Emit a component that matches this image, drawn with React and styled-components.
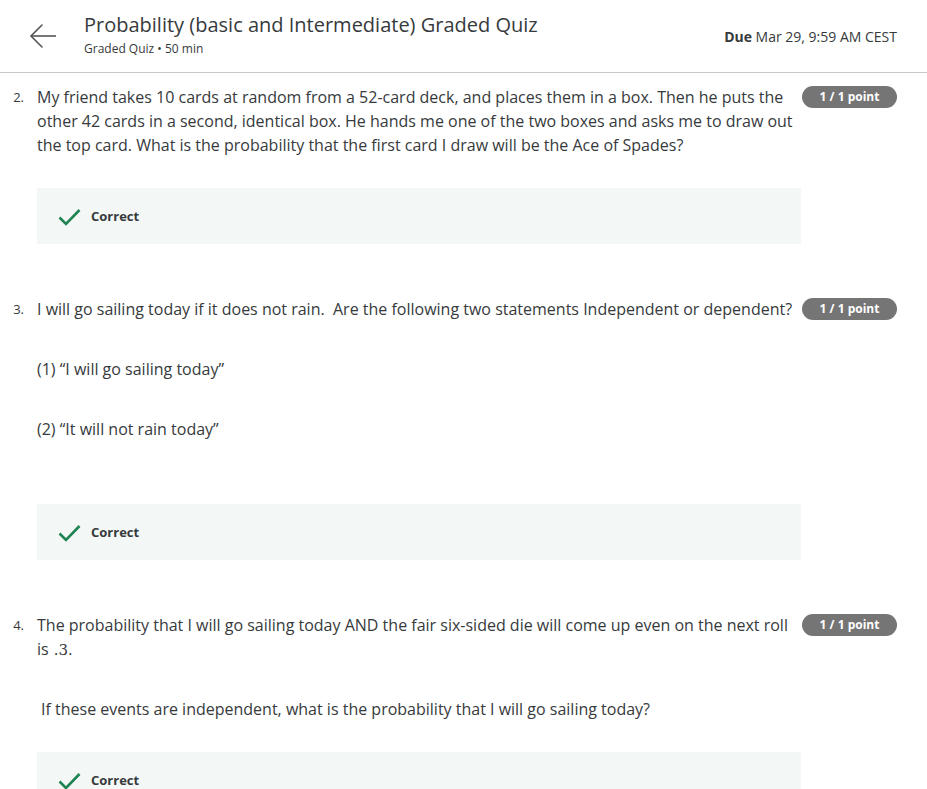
import React from "react";
import styled, { createGlobalStyle } from "styled-components";

const Global = createGlobalStyle`
  html, body { margin: 0; padding: 0; background: #fff; }
  body { font-family: "Open Sans", "Noto Sans", sans-serif; color: #373a3c; }
  * { box-sizing: border-box; }
`;

const Page = styled.div`
  width: 927px;
  height: 789px;
  overflow: hidden;
  background: #fff;
`;

const Header = styled.header`
  display: flex;
  align-items: center;
  height: 73px;
  padding: 0 29px 0 29px;
  border-bottom: 1px solid #c8c8c8;
`;

const BackButton = styled.button`
  display: flex;
  align-items: center;
  justify-content: center;
  width: 28px;
  height: 28px;
  padding: 0;
  margin: -1px 27px 0 0;
  background: none;
  border: none;
`;

const TitleBlock = styled.div`
  display: flex;
  flex-direction: column;
  flex: 1;
  margin-top: -4px;
`;

const Title = styled.h1`
  margin: 0;
  font-family: "Open Sans", sans-serif;
  font-weight: 400;
  font-size: 20px;
  line-height: 26px;
  color: #373a3c;
`;

const Subtitle = styled.div`
  font-family: "Open Sans", sans-serif;
  font-size: 12px;
  line-height: 16px;
  margin-top: 3px;
  color: #373a3c;
`;

const Due = styled.div`
  font-family: "Open Sans", sans-serif;
  font-size: 14px;
  color: #373a3c;
  margin-right: 1px;
  b { font-weight: 700; }
`;

const List = styled.div`
  display: flex;
  flex-direction: column;
  padding: 12px 30px 0 0;
`;

const Question = styled.section`
  display: grid;
  grid-template-columns: 37px 764px 96px;
  margin-bottom: ${(p) => p.$after}px;
`;

const Num = styled.div`
  font-size: 13px;
  line-height: 24px;
  text-align: right;
  padding-right: 13px;
  color: #373a3c;
`;

const Body = styled.div`
  display: flex;
  flex-direction: column;
`;

const Para = styled.p`
  margin: 0 0 ${(p) => p.$gap ?? 36}px;
  padding-left: ${(p) => p.$indent || 0}px;
  font-size: 16px;
  line-height: 24px;
  color: #373a3c;
`;

const Math = styled.span`
  font-family: "DejaVu Serif", "Liberation Serif", serif;
  font-size: 15px;
  line-height: 1;
  margin-left: 1px;
`;

const Badge = styled.div`
  justify-self: end;
  align-self: start;
  width: 95px;
  height: 22px;
  margin-top: 1px;
  border-radius: 11px;
  background: #757575;
  color: #fff;
  font-size: 12px;
  font-weight: 700;
  line-height: 22px;
  text-align: center;
`;

const Feedback = styled.div`
  display: flex;
  align-items: center;
  height: 56px;
  padding-left: 21px;
  background: #f3f8f6;
  font-size: 13px;
  font-weight: 700;
  color: #373a3c;
  gap: 10px;
  svg { margin-top: 1px; }
`;

const ArrowIcon = () => (
  <svg width="28" height="26" viewBox="0 0 28 26" fill="none">
    <path d="M27 13H3" stroke="#555" strokeWidth="1.6" />
    <path d="M13 2L2 13L13 24" stroke="#555" strokeWidth="1.6" strokeLinecap="round" strokeLinejoin="miter" />
  </svg>
);

const Check = () => (
  <svg width="23" height="18" viewBox="0 0 23 18" fill="none">
    <path d="M1.5 9.5L8 16L21.5 2" stroke="#1f8354" strokeWidth="2.6" />
  </svg>
);

const Correct = () => (
  <Feedback>
    <Check />
    Correct
  </Feedback>
);

export default function App() {
  return (
    <Page>
      <Global />
      <Header>
        <BackButton aria-label="Back">
          <ArrowIcon />
        </BackButton>
        <TitleBlock>
          <Title>Probability (basic and Intermediate) Graded Quiz</Title>
          <Subtitle>Graded Quiz • 50 min</Subtitle>
        </TitleBlock>
        <Due>
          <b>Due</b> Mar 29, 9:59 AM CEST
        </Due>
      </Header>
      <List>
        <Question $after={53}>
          <Num>2.</Num>
          <Body>
            <Para $gap={31}>
              My friend takes 10 cards at random from a 52-card deck, and places them in a box. Then he puts the other 42 cards in a second, identical box. He hands me one of the two boxes and asks me to draw out the top card. What is the probability that the first card I draw will be the Ace of Spades?
            </Para>
            <Correct />
          </Body>
          <Badge>1 / 1 point</Badge>
        </Question>
        <Question $after={53}>
          <Num>3.</Num>
          <Body>
            <Para>I will go sailing today if it does not rain.&nbsp; Are the following two statements Independent or dependent?</Para>
            <Para>(1) “I will go sailing today”</Para>
            <Para $gap={63}>(2) “It will not rain today”</Para>
            <Correct />
          </Body>
          <Badge>1 / 1 point</Badge>
        </Question>
        <Question $after={0}>
          <Num>4.</Num>
          <Body>
            <Para $gap={36}>
              The probability that I will go sailing today AND the fair six-sided die will come up even on the next roll is <Math>.3</Math>.
            </Para>
            <Para $gap={31} $indent={4}>If these events are independent, what is the probability that I will go sailing today?</Para>
            <Correct />
          </Body>
          <Badge>1 / 1 point</Badge>
        </Question>
      </List>
    </Page>
  );
}
